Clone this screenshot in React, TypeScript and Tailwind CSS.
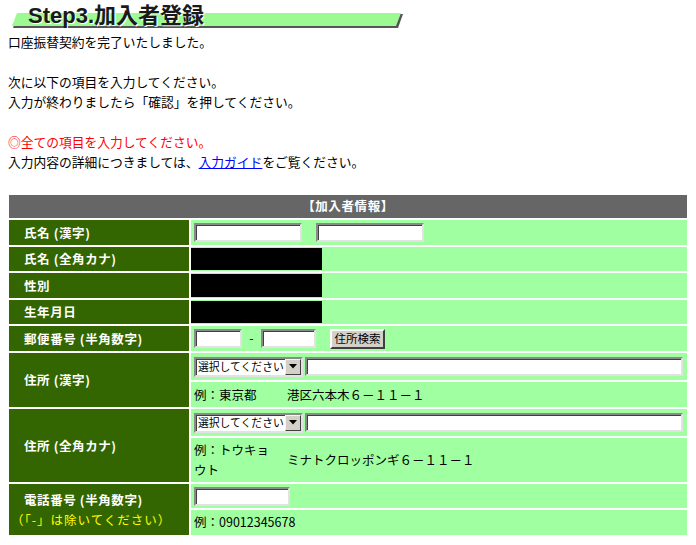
import React from 'react';

const jp = "font-['Noto_Sans_CJK_JP',sans-serif]";

function TextBox({ w }: { w: string }) {
  return (
    <input
      type="text"
      className={`${w} h-[19px] bg-white border-2 border-t-[#8a8a8a] border-l-[#8a8a8a] border-b-[#e2e2e2] border-r-[#e2e2e2] shadow-[inset_1px_1px_0_#404040] outline-none`}
    />
  );
}

function FakeSelect() {
  return (
    <div className="flex h-[20px] w-[109px] items-stretch bg-white border-2 border-t-[#8a8a8a] border-l-[#8a8a8a] border-b-[#e2e2e2] border-r-[#e2e2e2] shadow-[inset_1px_1px_0_#404040]">
      <span className="flex flex-1 items-center overflow-hidden whitespace-nowrap pl-[2px] text-[10.8px] leading-none text-black">
        選択してください
      </span>
      <span className="flex w-[16px] shrink-0 items-center justify-center bg-[#d4d0c8] border border-t-[#f4f4f4] border-l-[#f4f4f4] border-b-[#404040] border-r-[#404040]">
        <svg width="8" height="5" viewBox="0 0 8 5">
          <path d="M0 0H8L4 4.5Z" fill="#000" />
        </svg>
      </span>
    </div>
  );
}

function Label({ children }: { children: React.ReactNode }) {
  return (
    <div className="flex items-center bg-[#336600] pl-[15px] font-bold tracking-[0.6px] text-white leading-[20px]">
      {children}
    </div>
  );
}

export default function App() {
  return (
    <div className={`w-[696px] h-[545px] overflow-hidden bg-white text-black text-[12.5px] ${jp}`}>
      {/* step heading */}
      <div className="relative h-[32px]">
        <svg className="absolute left-0 top-0" width="410" height="32" viewBox="0 0 410 32">
          <polygon points="18,14 403,14 398,28 13,28" fill="#555" />
          <polygon points="17,13 401,13 396,26 12,26" fill="#9dfa93" />
        </svg>
        <div className="relative pl-[28px] pt-[3px] text-[22px] font-bold leading-[26px] text-[#1a1a1a] font-['Liberation_Sans','Noto_Sans_CJK_JP',sans-serif] [text-shadow:1px_1px_0_#fff]">
          Step3.加入者登録
        </div>
      </div>

      {/* intro text */}
      <div className="pl-[8px] text-[12.75px] leading-[20px]">
        <p>口座振替契約を完了いたしました。</p>
        <p>&nbsp;</p>
        <p>次に以下の項目を入力してください。</p>
        <p>入力が終わりましたら「確認」を押してください。</p>
        <p>&nbsp;</p>
        <p className="text-[#ff0000]">◎全ての項目を入力してください。</p>
        <p>
          入力内容の詳細につきましては、<a href="#" className="text-[#0000ff] underline">入力ガイド</a>をご覧ください。
        </p>
      </div>

      {/* form table */}
      <div className="ml-[9px] mt-[23px] grid w-[678px] grid-cols-[180px_496px] gap-[2px] bg-white">
        <div className="col-span-2 flex h-[23px] items-center justify-center bg-[#666666] font-bold tracking-[0.6px] text-white">
          【加入者情報】
        </div>

        <Label>氏名 (漢字)</Label>
        <div className="flex h-[25px] items-center gap-[14px] bg-[#a0ffa0] pl-[3px]">
          <TextBox w="w-[108px]" />
          <TextBox w="w-[108px]" />
        </div>

        <Label>氏名 (全角カナ)</Label>
        <div className="flex h-[24px] items-center bg-[#a0ffa0]">
          <div className="h-[22px] w-[131px] bg-black" />
        </div>

        <Label>性別</Label>
        <div className="flex h-[25px] items-center bg-[#a0ffa0]">
          <div className="h-[23px] w-[131px] bg-black" />
        </div>

        <Label>生年月日</Label>
        <div className="flex h-[24px] items-center bg-[#a0ffa0]">
          <div className="h-[22px] w-[131px] bg-black" />
        </div>

        <Label>郵便番号 (半角数字)</Label>
        <div className="flex h-[25px] items-center bg-[#a0ffa0] pl-[3px]">
          <TextBox w="w-[48px]" />
          <span className="w-[19px] text-center">-</span>
          <TextBox w="w-[55px]" />
          <button className="ml-[14px] h-[20px] w-[55px] bg-[#d4d0c8] border-2 border-t-[#fff] border-l-[#fff] border-b-[#404040] border-r-[#404040] text-[11.5px] leading-none text-black">
            住所検索
          </button>
        </div>

        <Label>住所 (漢字)</Label>
        <div className="flex flex-col gap-[2px]">
          <div className="flex h-[27px] items-center gap-[2px] bg-[#a0ffa0] pl-[3px]">
            <FakeSelect />
            <TextBox w="w-[378px]" />
          </div>
          <div className="flex h-[25px] items-center bg-[#a0ffa0] leading-[20px]">
            <div className="w-[91px] px-[3px]">例：東京都</div>
            <div className="pl-[5px]">港区六本木６－１１－１</div>
          </div>
        </div>

        <Label>住所 (全角カナ)</Label>
        <div className="flex flex-col gap-[2px]">
          <div className="flex h-[27px] items-center gap-[2px] bg-[#a0ffa0] pl-[3px]">
            <FakeSelect />
            <TextBox w="w-[378px]" />
          </div>
          <div className="flex h-[44px] items-center bg-[#a0ffa0] leading-[20px]">
            <div className="w-[91px] px-[3px]">例：トウキョウト</div>
            <div className="pl-[5px]">ミナトクロッポンギ６－１１－１</div>
          </div>
        </div>

        <div className="flex flex-col justify-center bg-[#336600] font-bold leading-[20px]">
          <span className="pl-[15px] tracking-[0.6px] text-white">電話番号 (半角数字)</span>
          <span className="pl-[2px] font-normal tracking-[1px] text-[#ffff00]">（「-」は除いてください）</span>
        </div>
        <div className="flex flex-col gap-[2px]">
          <div className="flex h-[24px] items-center bg-[#a0ffa0] pl-[3px]">
            <TextBox w="w-[96px]" />
          </div>
          <div className="flex h-[25px] items-center bg-[#a0ffa0] pl-[3px]">例：09012345678</div>
        </div>
      </div>
    </div>
  );
}
